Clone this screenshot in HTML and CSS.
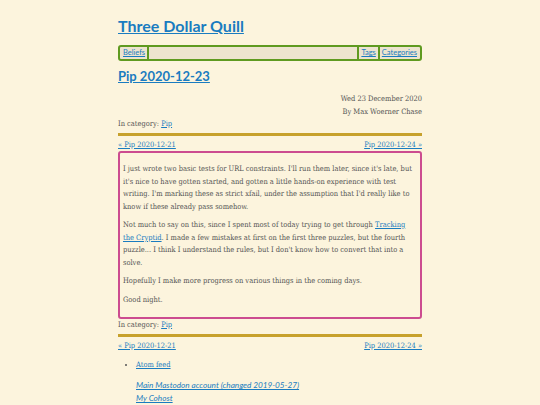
FILE: index.html
```html
<!DOCTYPE html>
<html>
<head>
<meta charset="utf-8">
<link rel="stylesheet" href="styles.css">
</head>
<body>
<div class="page">
  <header class="site-header">
    <h1 class="site-title"><a href="#">Three Dollar Quill</a></h1>
    <nav class="site-nav">
      <a class="nav-item nav-first" href="#">Beliefs</a>
      <span class="nav-spacer"></span>
      <a class="nav-item nav-last" href="#">Tags</a>
      <a class="nav-item nav-last" href="#">Categories</a>
    </nav>
  </header>
  <article class="post">
    <h2 class="post-title"><a href="#">Pip 2020-12-23</a></h2>
    <div class="post-meta">
      <div>Wed 23 December 2020</div>
      <div>By Max Woerner Chase</div>
    </div>
    <div class="category">In category: <a href="#">Pip</a></div>
    <hr class="rule">
    <div class="pager"><a href="#">« Pip 2020-12-21</a><a href="#">Pip 2020-12-24 »</a></div>
    <div class="post-body">
      <p>I just wrote two basic tests for URL constraints. I'll run them later, since it's late, but it's nice to have gotten started, and gotten a little hands-on experience with test writing. I'm marking these as strict xfail, under the assumption that I'd really like to know if these already pass somehow.</p>
      <p>Not much to say on this, since I spent most of today trying to get through <a href="#">Tracking the Cryptid</a>. I made a few mistakes at first on the first three puzzles, but the fourth puzzle... I think I understand the rules, but I don't know how to convert that into a solve.</p>
      <p>Hopefully I make more progress on various things in the coming days.</p>
      <p>Good night.</p>
    </div>
    <div class="category">In category: <a href="#">Pip</a></div>
    <hr class="rule">
    <div class="pager"><a href="#">« Pip 2020-12-21</a><a href="#">Pip 2020-12-24 »</a></div>
  </article>
  <footer class="site-footer">
    <ul class="feeds"><li><a href="#">Atom feed</a></li></ul>
    <div class="social">
      <a href="#">Main Mastodon account (changed 2019-05-27)</a>
      <a href="#">My Cohost</a>
    </div>
  </footer>
</div>
</body>
</html>
```
FILE: styles.css
```css
html, body {
  margin: 0;
  padding: 0;
  background: #fcf4dd;
}
body {
  font-family: "DejaVu Serif Condensed", "DejaVu Serif", serif;
  font-size: 7.45px;
  color: #555;
}
a { color: #1a7cc0; }
.page {
  width: 304px;
  margin: 0 auto;
  padding-top: 15px;
}
.site-title {
  margin: 0;
  font-family: "Lato", "Open Sans", sans-serif;
  font-weight: 700;
  font-size: 16px;
  line-height: 22px;
}
.site-nav {
  margin-top: 8px;
  display: flex;
  align-items: center;
  border: 2px solid #5f9a20;
  border-radius: 3px;
  background: #ede4cf;
  height: 12px;
  padding: 0 1px;
  font-family: "Lato", "Open Sans", sans-serif;
  font-size: 7.5px;
}
.nav-item { padding: 0 2px; line-height: 12px; }
.nav-first { border-right: 2px solid #5f9a20; }
.nav-last { border-left: 2px solid #5f9a20; }
.nav-spacer { flex: 1; }
.post-title {
  margin: 7px 0 0;
  font-family: "Lato", "Open Sans", sans-serif;
  font-weight: 700;
  font-size: 13px;
  line-height: 16px;
}
.post-meta {
  margin-top: 9px;
  text-align: right;
  line-height: 12.5px;
}
.category { line-height: 11px; }
.rule {
  margin: 4px 0 4px;
  border: 0;
  height: 3px;
  background: #c7a12c;
}
.pager {
  display: flex;
  justify-content: space-between;
  line-height: 10px;
}
.post-body {
  margin-top: 1px;
  border: 2px solid #cc4c90;
  border-radius: 3px;
  padding: 10px 4px 5px 3px;
}
.post-body p {
  margin: 0 0 6px;
  line-height: 12.5px;
}
.site-footer { margin-top: 8px; }
.feeds {
  margin: 0;
  padding-left: 18px;
  line-height: 12px;
}
.social {
  margin-top: 8px;
  padding-left: 18px;
  display: flex;
  flex-direction: column;
  font-family: "Lato", "Open Sans", sans-serif;
  font-style: italic;
  font-size: 8.2px;
  line-height: 13px;
}
```
